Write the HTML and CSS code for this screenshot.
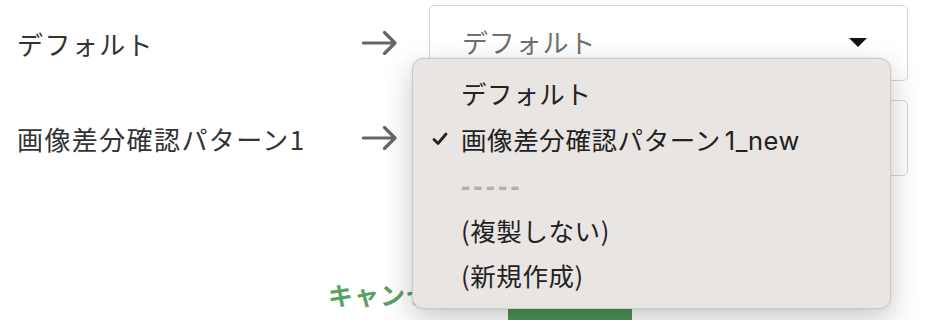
FILE: index.html
```html
<!DOCTYPE html>
<html lang="ja">
<head>
<meta charset="utf-8">
<link rel="stylesheet" href="styles.css">
</head>
<body>
<div class="page">
  <div class="rows">
    <div class="row">
      <div class="label">デフォルト</div>
      <svg class="arrow" viewBox="0 0 36 24" width="36" height="24"><path d="M1.5 12 H33 M22.5 1.5 L33 12 L22.5 22.5" fill="none" stroke="#666" stroke-width="3.2" stroke-linecap="round" stroke-linejoin="round"/></svg>
      <div class="select"><span class="select-text">デフォルト</span><span class="caret"></span></div>
    </div>
    <div class="row">
      <div class="label">画像差分確認パターン1</div>
      <svg class="arrow" viewBox="0 0 36 24" width="36" height="24"><path d="M1.5 12 H33 M22.5 1.5 L33 12 L22.5 22.5" fill="none" stroke="#666" stroke-width="3.2" stroke-linecap="round" stroke-linejoin="round"/></svg>
      <div class="select"><span class="select-text">画像差分確認パターン1_new</span><span class="caret"></span></div>
    </div>
  </div>
  <div class="footer">
    <span class="cancel">キャンセル</span>
    <span class="ok"></span>
  </div>
  <ul class="menu">
    <li class="item">デフォルト</li>
    <li class="item checked"><svg class="check" viewBox="0 0 16 14" width="16" height="14"><path d="M2 7.5 L6 11.5 L14 2" fill="none" stroke="#222" stroke-width="2.8" stroke-linecap="round" stroke-linejoin="round"/></svg>画像差分確認パターン<span class="num">1_new</span></li>
    <li class="item sep">-----</li>
    <li class="item">(複製しない)</li>
    <li class="item">(新規作成)</li>
  </ul>
</div>
</body>
</html>
```

FILE: styles.css
```css
html, body {
  margin: 0;
  padding: 0;
  background: #ffffff;
}
body {
  font-family: "Noto Sans CJK JP", "Noto Sans", sans-serif;
  color: #333333;
  overflow: hidden;
  width: 932px;
  height: 320px;
}
.page {
  position: relative;
  width: 932px;
  height: 320px;
}
.rows {
  display: flex;
  flex-direction: column;
  gap: 19px;
  padding-top: 5px;
  padding-left: 17px;
}
.row {
  display: flex;
  align-items: center;
  height: 76px;
}
.label {
  width: 345px;
  font-size: 26px;
  color: #333333;
  letter-spacing: 1.4px;
}
.arrow {
  display: block;
  margin-right: 31px;
}
.select {
  box-sizing: border-box;
  width: 479px;
  height: 76px;
  border: 1.5px solid #d6d6d6;
  border-radius: 5px;
  background: #ffffff;
  display: flex;
  align-items: center;
  justify-content: space-between;
  padding: 0 40px 4px 32px;
}
.select-text {
  font-size: 26px;
  color: #707070;
  letter-spacing: 0.8px;
}
.caret {
  width: 0;
  height: 0;
  border-left: 9.5px solid transparent;
  border-right: 9.5px solid transparent;
  border-top: 9px solid #111111;
  margin-top: 2px;
}
.footer {
  display: flex;
  align-items: flex-start;
  padding-left: 328px;
  margin-top: 100px;
}
.cancel {
  font-size: 25px;
  font-weight: 700;
  color: #5aa263;
  width: 180px;
  letter-spacing: 1px;
  line-height: 36px;
}
.ok {
  display: block;
  width: 124px;
  height: 40px;
  margin-top: 20px;
  background: #4f9457;
}
.menu {
  position: absolute;
  left: 412px;
  top: 58px;
  box-sizing: border-box;
  width: 479px;
  height: 251px;
  margin: 0;
  padding: 11px 0 0 0;
  list-style: none;
  background: #e9e5e3;
  border: 1px solid #cdc9c7;
  border-radius: 11px;
  box-shadow: 0 10px 30px rgba(0, 0, 0, 0.22), 0 0 3px rgba(0, 0, 0, 0.08);
}
.item {
  position: relative;
  height: 45.5px;
  line-height: 45.5px;
  padding-left: 48px;
  font-size: 25.5px;
  color: #222222;
  white-space: nowrap;
  letter-spacing: 0.6px;
}
.num {
  margin-left: 4px;
  font-family: "Inter", "Noto Sans", sans-serif;
  letter-spacing: 0.6px;
}
.check {
  position: absolute;
  left: 19px;
  top: 16px;
}
.sep {
  box-sizing: border-box;
  padding-top: 3px;
  color: #b3afad;
  font-family: "Liberation Sans", sans-serif;
  font-weight: 700;
  letter-spacing: 3px;
  font-size: 28px;
}
```
